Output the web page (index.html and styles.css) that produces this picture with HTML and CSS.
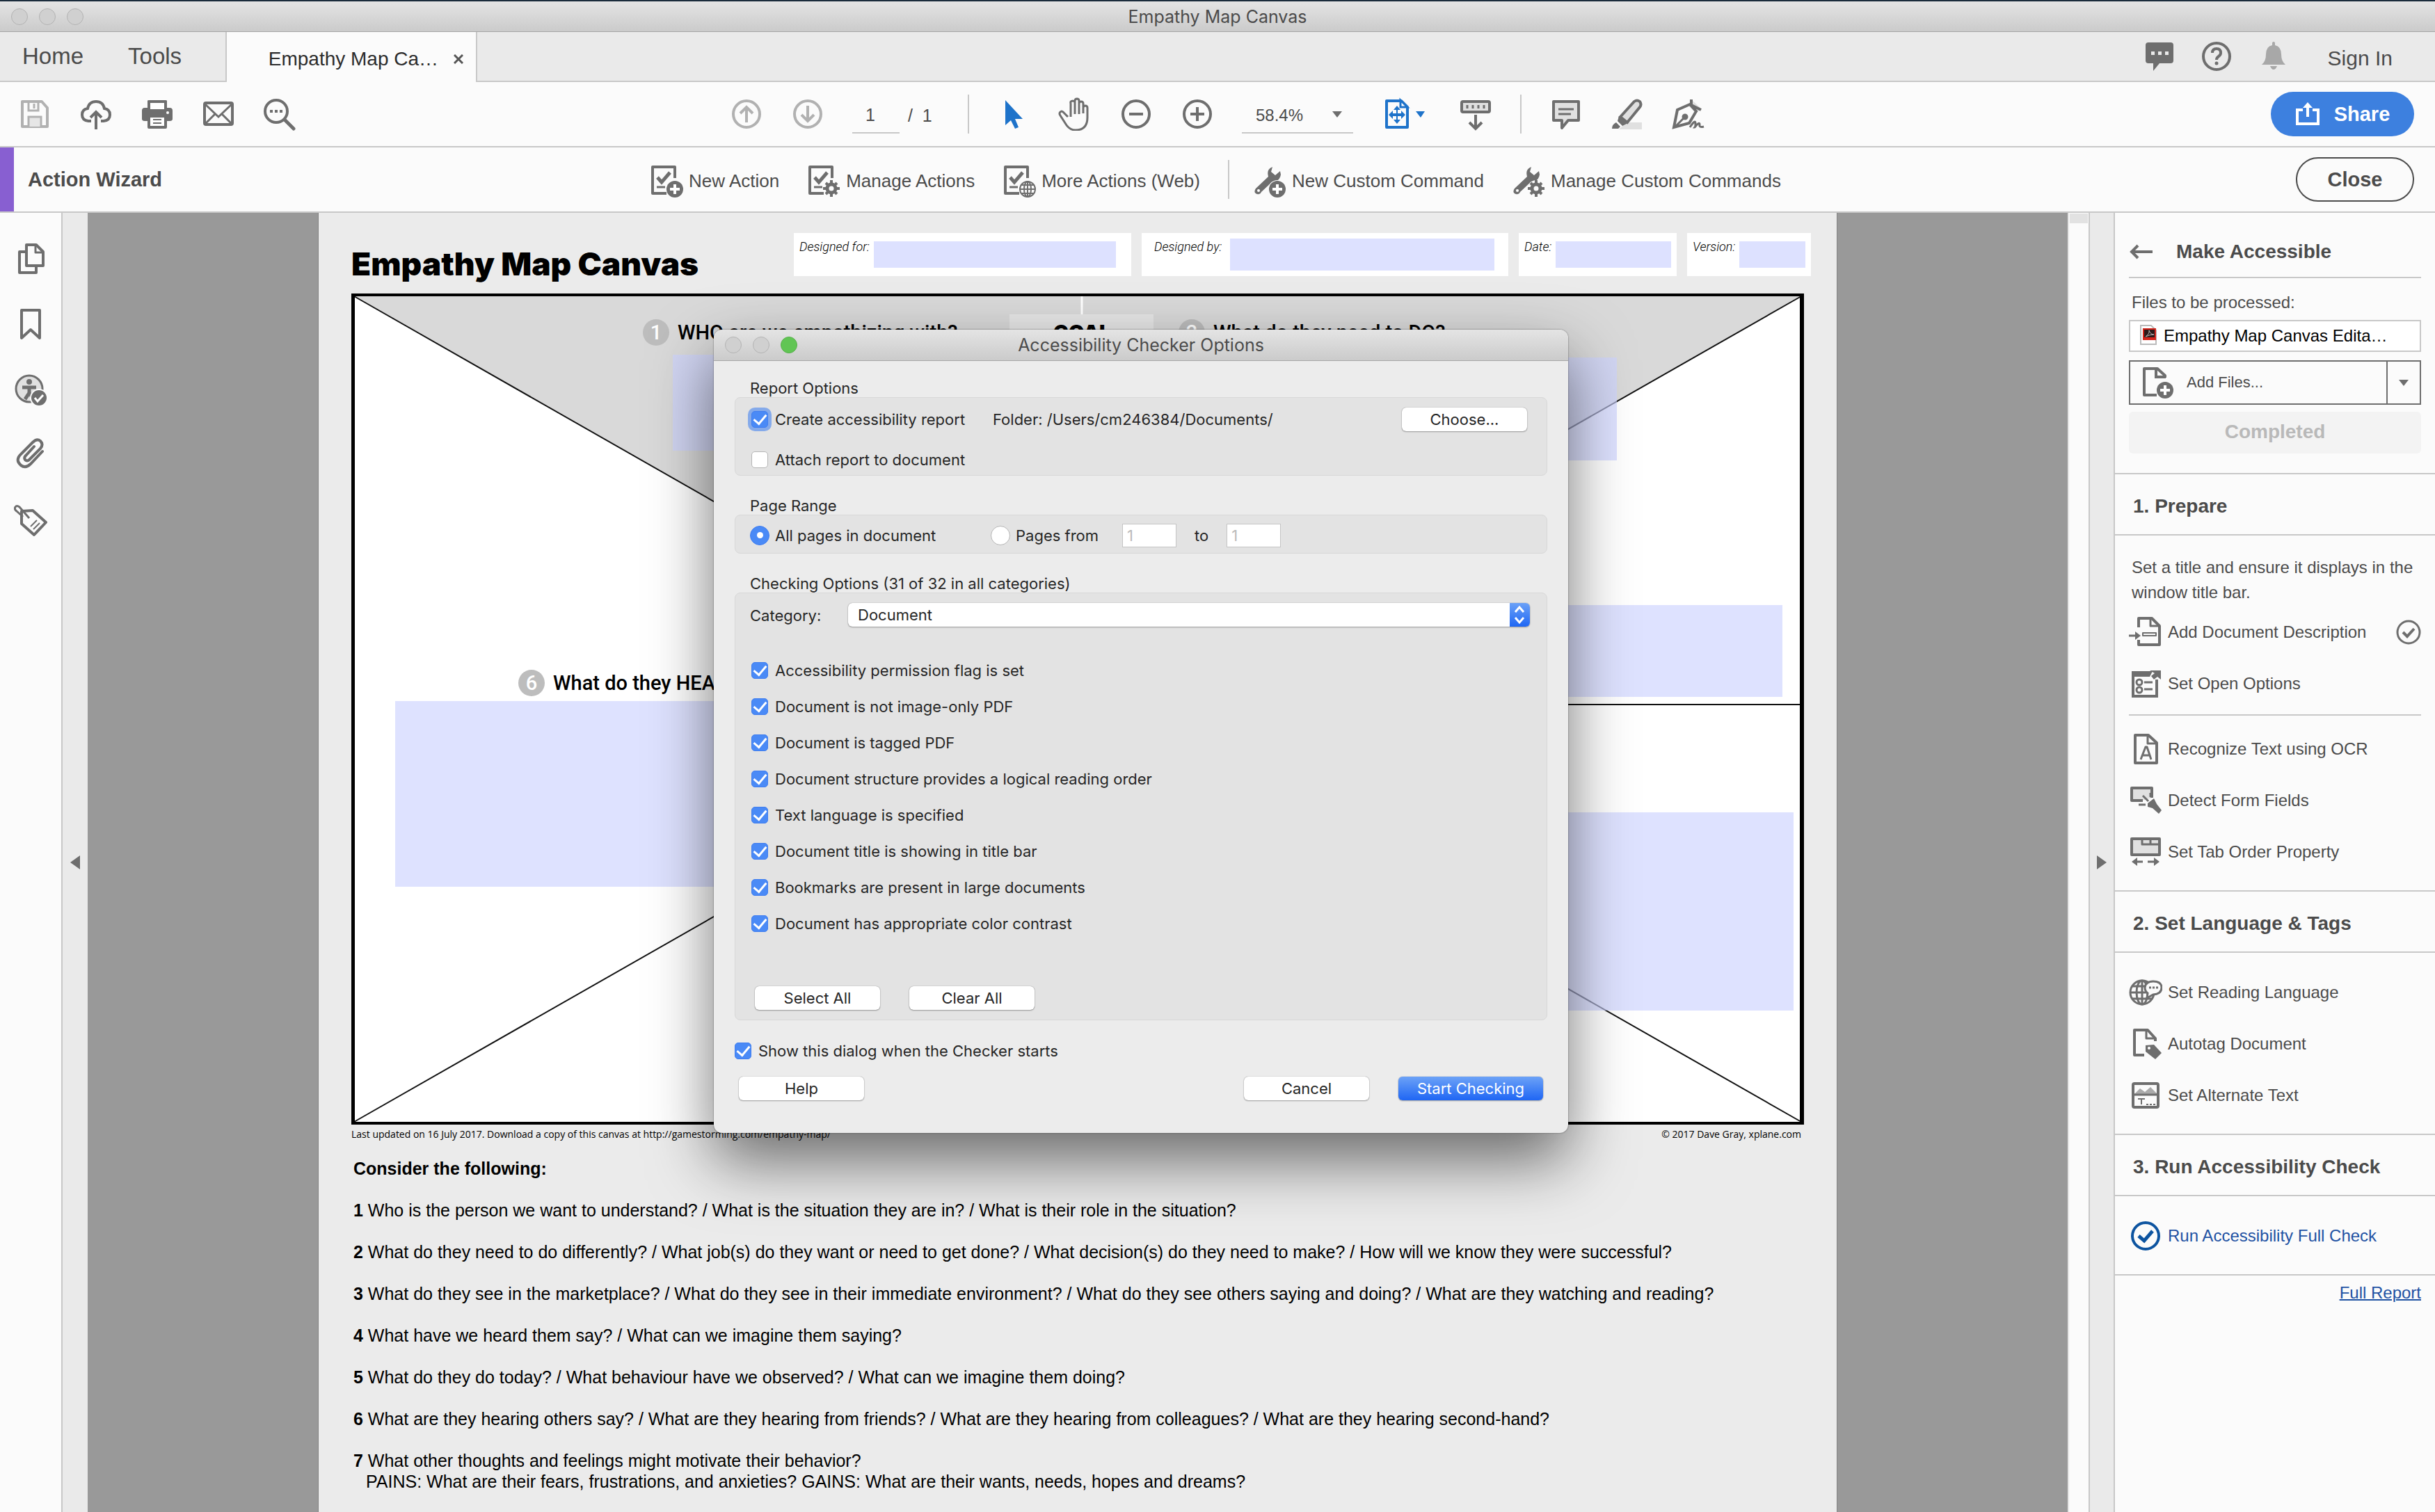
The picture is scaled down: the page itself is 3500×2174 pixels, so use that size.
FILE: index.html
```html
<!DOCTYPE html>
<html lang="en">
<head>
    <meta charset="UTF-8">
    <meta name="viewport" content="width=device-width, initial-scale=1.0">
    <title>Empathy Map Canvas</title>
    <link rel="stylesheet" href="styles.css">
</head>
<body>
    <header class="titlebar">
        <div class="lights"><span class="light"></span><span class="light"></span><span class="light"></span></div>
        <h1 class="window-title">Empathy Map Canvas</h1>
    </header>

    <nav class="tabs">
        <a class="tab" href="#">Home</a>
        <a class="tab" href="#">Tools</a>
        <div class="tab-open">
            <span>Empathy Map Ca…</span>
            <button class="tab-close" aria-label="Close tab"><svg width="14" height="14" viewBox="0 0 14 14"><path d="M1 1l12 12M13 1L1 13" stroke="#555" stroke-width="3"/></svg></button>
        </div>
        <div class="account">
            <button class="icon" aria-label="Messages"><svg viewBox="0 0 48 48"><path d="M8 4h32q4 0 4 4v22q0 4-4 4H24l-9 11V34H8q-4 0-4-4V8q0-4 4-4z" fill="#6e6e6e"/><path d="M12 17h5v5h-5zM22 17h5v5h-5zM32 17h5v5h-5z" fill="#eaeaea"/></svg></button>
            <button class="icon" aria-label="Help"><svg viewBox="0 0 48 48"><circle cx="24" cy="24" r="19" fill="none" stroke="#6e6e6e" stroke-width="4"/><path d="M18 19q0-6 6-6t6 6q0 3-3 5t-3 5" fill="none" stroke="#6e6e6e" stroke-width="4"/><circle cx="24" cy="34" r="2.500" fill="#6e6e6e"/></svg></button>
            <button class="icon" aria-label="Notifications"><svg viewBox="0 0 48 48"><path d="M22 5q0-2 2-2t2 2v3q9 2 9 13 0 10 6 15H7q6-5 6-15 0-11 9-13zM19 38h10q-2 5-5 5t-5-5z" fill="#a8a8a8"/></svg></button>
            <a class="sign-in" href="#">Sign In</a>
        </div>
    </nav>

    <div class="toolbar">
        <div class="file-tools">
            <button class="icon" aria-label="Save"><svg viewBox="0 0 48 48" fill="none" stroke="#b1b1b1" stroke-width="4"><path d="M6 6h28l8 9v27H6z" stroke-linejoin="round"/><path d="M15 7v12h14V7M23 9v7" stroke-width="3"/><path d="M15 42V28h18v14" fill="#e6e6e6" stroke-width="3"/></svg></button>
            <button class="icon" aria-label="Upload"><svg viewBox="0 0 48 48" fill="none" stroke="#6e6e6e" stroke-width="4"><path d="M17 34h-4Q4 33 4 25t8-9Q14 6 24 6t12 10q8 1 8 9t-9 9h-4"/><path d="M24 46V22M16 29l8-8 8 8"/></svg></button>
            <button class="icon" aria-label="Print"><svg viewBox="0 0 48 48"><path d="M10 15V5q0-1 2-1h24q2 0 2 1v10h4q4 0 4 4v12q0 3-4 3h-4v9q0 2-2 2H12q-2 0-2-2v-9H6q-4 0-4-3V19q0-4 4-4z" fill="#6e6e6e"/><path d="M14 8h20v9H14zM14 29h20v12H14z" fill="#fff"/><path d="M18 32h12M18 37h12" stroke="#6e6e6e" stroke-width="2"/><circle cx="39" cy="22" r="2" fill="#fff"/></svg></button>
            <button class="icon" aria-label="Email"><svg viewBox="0 0 48 48" fill="none" stroke="#6e6e6e" stroke-width="3"><rect x="4" y="8" width="40" height="31" rx="2" stroke-width="4"/><path d="M5 10l19 18L43 10M5 38l14-14M43 38L29 24"/></svg></button>
            <button class="icon" aria-label="Search"><svg viewBox="0 0 48 48" fill="none" stroke="#6e6e6e" stroke-width="4"><circle cx="19" cy="20" r="16"/><path d="M31 32l13 13" stroke-width="5" stroke-linecap="round"/><path d="M10 18h4v4h-4zM17 18h4v4h-4zM24 18h4v4h-4z" fill="#6e6e6e" stroke="none"/></svg></button>
        </div>
        <div class="view-tools">
            <button class="icon" aria-label="Previous page"><svg viewBox="0 0 48 48" fill="none" stroke="#b1b1b1" stroke-width="4"><circle cx="24" cy="24" r="19"/><path d="M24 36V15M15 23l9-9 9 9"/></svg></button>
            <button class="icon" aria-label="Next page"><svg viewBox="0 0 48 48" fill="none" stroke="#b1b1b1" stroke-width="4"><circle cx="24" cy="24" r="19"/><path d="M24 12v21M15 25l9 9 9-9"/></svg></button>
            <div class="page-number"><input type="text" value="1" aria-label="Page number"><span>/&nbsp; 1</span></div>
            <span class="divider"></span>
            <button class="icon" aria-label="Select"><svg viewBox="0 0 48 48"><path d="M12 4v36l8-7 6 12 5-2-5-12h11z" fill="#1e73ca"/></svg></button>
            <button class="icon" aria-label="Pan"><svg viewBox="0 0 48 48" fill="none" stroke="#6e6e6e" stroke-width="3" stroke-linejoin="round"><path d="M14 28L7 21q-2-2-4 0t0 5l9 14q5 7 13 7 17 0 17-18V15q0-3-3-3t-3 3v8M36 14V9q0-3-3-3t-3 3v15M30 9V5q0-3-3-3t-3 3v19M24 7q-1-2-3-2-4 0-3 4v19"/></svg></button>
            <button class="icon" aria-label="Zoom out"><svg viewBox="0 0 48 48" fill="none" stroke="#6e6e6e" stroke-width="4"><circle cx="24" cy="24" r="19"/><path d="M14 24h20"/></svg></button>
            <button class="icon" aria-label="Zoom in"><svg viewBox="0 0 48 48" fill="none" stroke="#6e6e6e" stroke-width="4"><circle cx="24" cy="24" r="19"/><path d="M14 24h20M24 14v20"/></svg></button>
            <div class="zoom">
                <select aria-label="Zoom level"><option>58.4%</option></select>
                <svg class="caret" width="14" height="9" viewBox="0 0 14 9"><path d="M0 0h14L7 9z" fill="#6e6e6e"/></svg>
            </div>
            <button class="icon fit" aria-label="Fit page"><svg viewBox="0 0 64 48"><path d="M8 5h21l9 9v29H8z" fill="none" stroke="#1e73ca" stroke-width="4" stroke-linejoin="round"/><path d="M28 4v10h10z" fill="#fff" stroke="#1e73ca" stroke-width="3"/><path d="M23 12l5 6h-4v5h5v-4l6 6-6 6v-4h-5v5h4l-5 6-5-6h4v-5h-5v4l-6-6 6-6v4h5v-5h-4zM50 20h13l-6 9z" fill="#1e73ca"/></svg></button>
            <button class="icon" aria-label="Read mode"><svg viewBox="0 0 48 48" fill="none" stroke="#6e6e6e" stroke-width="4"><rect x="4" y="6" width="40" height="15" rx="2" fill="#e0e0e0"/><path d="M12 11v5M20 11v5M28 11v5M36 11v5" stroke-width="3"/><path d="M24 25v18M15 36l9 9 9-9"/></svg></button>
            <span class="divider"></span>
            <button class="icon" aria-label="Comment"><svg viewBox="0 0 48 48"><path d="M6 6h36v27H27L18 44V33H6z" fill="#e0e0e0" stroke="#6e6e6e" stroke-width="4" stroke-linejoin="round"/><path d="M13 17h22M13 24h18" stroke="#6e6e6e" stroke-width="3"/></svg></button>
            <button class="icon" aria-label="Highlight"><svg viewBox="0 0 48 48"><path d="M12 46l10-10h23v10z" fill="#e0e0e0"/><path d="M14 28L34 6q4-3 8 0 3 4 0 8L24 36z" fill="#e0e0e0" stroke="#6e6e6e" stroke-width="4"/><path d="M12 27l13 10-8 4-7-7zM8 36l6 6-3 3H2q0-6 6-9z" fill="#6e6e6e"/></svg></button>
            <button class="icon" aria-label="Sign"><svg viewBox="0 0 48 48" fill="none" stroke="#6e6e6e" stroke-width="3"><path d="M29 4l13 12-7 7-12-12z" fill="#e0e0e0" stroke="none"/><path d="M28 3v8L42 18M26 10L8 18 3 43l22-6 10-17z" stroke-width="4"/><path d="M4 43l14-14"/><circle cx="19" cy="28" r="3" fill="#6e6e6e"/><path d="M26 43q8-12 8-6t-1 6q7-9 7-4-1 5 6 3"/></svg></button>
        </div>
        <div class="toolbar-end">
            <button class="share"><svg width="36" height="36" viewBox="0 0 36 36" fill="none" stroke="#fff" stroke-width="4"><path d="M11 12H3v20h30V12h-8"/><path d="M18 22V5"/><path d="M11 9l7-8 7 8z" fill="#fff" stroke="none"/></svg>Share</button>
        </div>
    </div>

    <div class="action-bar">
        <h2 class="action-title">Action Wizard</h2>
        <div class="actions">
            <button class="action"><svg class="glyph" viewBox="0 0 48 48"><path d="M36 20V4H4v38h20" fill="none" stroke="#6e6e6e" stroke-width="4" stroke-linejoin="round"/><path d="M11 19l6 7L29 12" fill="none" stroke="#6e6e6e" stroke-width="5"/><path d="M10 33h12" stroke="#6e6e6e" stroke-width="3"/><circle cx="36" cy="36" r="12" fill="#6e6e6e"/><path d="M36 29v14M29 36h14" stroke="#fff" stroke-width="4"/></svg>New Action</button>
            <button class="action"><svg class="glyph" viewBox="0 0 48 48"><path d="M36 20V4H4v38h20" fill="none" stroke="#6e6e6e" stroke-width="4" stroke-linejoin="round"/><path d="M11 19l6 7L29 12" fill="none" stroke="#6e6e6e" stroke-width="5"/><path d="M10 33h12" stroke="#6e6e6e" stroke-width="3"/><circle cx="35" cy="35" r="6" fill="none" stroke="#6e6e6e" stroke-width="5"/><path d="M35 23v5M35 42v5M23 35h5M42 35h5M27 27l3 3M40 40l3 3M43 27l-3 3M27 43l3-3" stroke="#6e6e6e" stroke-width="4"/></svg>Manage Actions</button>
            <button class="action"><svg class="glyph" viewBox="0 0 48 48"><path d="M36 20V4H4v38h20" fill="none" stroke="#6e6e6e" stroke-width="4" stroke-linejoin="round"/><path d="M11 19l6 7L29 12" fill="none" stroke="#6e6e6e" stroke-width="5"/><path d="M10 33h12" stroke="#6e6e6e" stroke-width="3"/><g fill="none" stroke="#6e6e6e" stroke-width="2"><circle cx="36" cy="36" r="11"/><ellipse cx="36" cy="36" rx="5" ry="11"/><path d="M36 25v22M25 36h22M27 30h18M27 42h18"/></g></svg>More Actions (Web)</button>
            <span class="divider"></span>
            <button class="action"><svg class="glyph" viewBox="0 0 48 48"><path d="M28 4q-9 3-6 14L4 35q-4 6 2 8 4 1 6-3l16-15q10 1 12-10l-1-5-7 6-6-5z" fill="#6e6e6e"/><circle cx="8" cy="38" r="2" fill="#fff"/><circle cx="35" cy="36" r="13" fill="#fbfbfb"/><circle cx="35" cy="36" r="12" fill="#6e6e6e"/><path d="M35 29v14M28 36h14" stroke="#fff" stroke-width="4"/></svg>New Custom Command</button>
            <button class="action"><svg class="glyph" viewBox="0 0 48 48"><path d="M28 4q-9 3-6 14L4 35q-4 6 2 8 4 1 6-3l16-15q10 1 12-10l-1-5-7 6-6-5z" fill="#6e6e6e"/><circle cx="8" cy="38" r="2" fill="#fff"/><circle cx="35" cy="35" r="12" fill="#fbfbfb"/><circle cx="35" cy="35" r="6" fill="none" stroke="#6e6e6e" stroke-width="5"/><path d="M35 23v5M35 42v5M23 35h5M42 35h5M27 27l3 3M40 40l3 3M43 27l-3 3M27 43l3-3" stroke="#6e6e6e" stroke-width="4"/></svg>Manage Custom Commands</button>
        </div>
        <div class="toolbar-end">
            <button class="close">Close</button>
        </div>
    </div>

    <main class="workspace">
        <aside class="rail">
            <button class="icon" aria-label="Pages"><svg viewBox="0 0 48 48" fill="none" stroke="#6e6e6e" stroke-width="4" stroke-linejoin="round"><path d="M16 14H8v30h24v-8"/><path d="M18 4h14l10 10v20H18z" fill="#fbfbfb"/><path d="M31 4v11h11" stroke-width="3"/></svg></button>
            <button class="icon" aria-label="Bookmarks"><svg viewBox="0 0 48 48" fill="none" stroke="#6e6e6e" stroke-width="4" stroke-linejoin="round"><path d="M11 4h26v40L24 32 11 44z"/></svg></button>
            <button class="icon" aria-label="Accessibility"><svg viewBox="0 0 48 48"><circle cx="22" cy="23" r="19" fill="#e0e0e0" stroke="#6e6e6e" stroke-width="3"/><circle cx="22" cy="13" r="4" fill="#6e6e6e"/><path d="M12 21h20M22 21v8l-6 9M22 29l5 7" fill="none" stroke="#6e6e6e" stroke-width="5"/><circle cx="36" cy="36" r="13" fill="#fbfbfb"/><circle cx="36" cy="36" r="11" fill="#6e6e6e"/><path d="M30 36l4 5 8-9" fill="none" stroke="#fff" stroke-width="3"/></svg></button>
            <button class="icon" aria-label="Attachments"><svg viewBox="0 0 48 48" fill="none" stroke="#6e6e6e" stroke-width="4" stroke-linecap="round"><path d="M41 19L24 37q-7 7-14 2-8-7-1-15L27 6q6-6 11-2 5 5 0 11L22 31q-3 3-6 0-2-3 1-6l12-13"/></svg></button>
            <button class="icon" aria-label="Tags"><svg viewBox="0 0 48 48" fill="none" stroke="#6e6e6e" stroke-width="4" stroke-linejoin="round"><path d="M11 11l16-1 19 17-17 18L11 29z"/><path d="M22 21L8 5Q4 2 2 5t2 6l9 8" stroke-width="3"/><path d="M24 33l9-9M28 37l9-9" stroke-width="2"/></svg></button>
        </aside>
        <button class="collapse" aria-label="Hide left pane"><svg width="14" height="20" viewBox="0 0 14 20"><path d="M14 0v20L0 10z" fill="#6e6e6e"/></svg></button>

        <div class="viewport">
            <article class="sheet">
                <header class="sheet-head">
                    <h2 class="sheet-title">Empathy Map Canvas</h2>
                    <div class="meta">
                        <label class="meta-box for">Designed for: <input type="text"></label>
                        <label class="meta-box by">Designed by: <input type="text"></label>
                        <label class="meta-box">Date: <input type="text"></label>
                        <label class="meta-box">Version: <input type="text"></label>
                    </div>
                </header>

                <div class="map">
                    <svg class="map-lines" viewBox="0 0 2088 1195" preserveAspectRatio="none">
                        <path d="M0 0h2088v1195H0z" fill="#fff"/>
                        <path d="M4 4h2080L1044 597z" fill="#d9d9d9"/>
                        <path d="M4 4l2080 1187M2084 4L4 1191M1044 591h1040" stroke="#111" stroke-width="2"/>
                        <path d="M1050 4v27" stroke="#fff" stroke-width="3"/>
                        <path d="M946 30h207v60H946z" fill="#e6e6e6"/>
                        <path d="M0 0h2088v1195H0zM5 4v1187h2077V4z" fill="#000" fill-rule="evenodd"/>
                    </svg>
                    <p class="question q1"><span class="badge">1</span>WHO are we empathizing with?</p>
                    <p class="goal">GOAL</p>
                    <p class="question q2"><span class="badge">2</span>What do they need to DO?</p>
                    <p class="question q6"><span class="badge">6</span>What do they HEAR?</p>
                    <textarea class="answer a1" aria-label="Who are we empathizing with"></textarea>
                    <textarea class="answer a2" aria-label="What do they need to do"></textarea>
                    <textarea class="answer a3" aria-label="What do they see"></textarea>
                    <textarea class="answer a4" aria-label="What do they say"></textarea>
                    <textarea class="answer a6" aria-label="What do they hear"></textarea>
                </div>

                <footer class="credits">
                    <span>Last updated on 16 July 2017. Download a copy of this canvas at http://gamestorming.com/empathy-map/</span>
                    <span>© 2017 Dave Gray, xplane.com</span>
                </footer>

                <div class="consider">
                    <p><b>Consider the following:</b></p>
                    <p><b>1</b> Who is the person we want to understand? / What is the situation they are in? / What is their role in the situation?</p>
                    <p><b>2</b> What do they need to do differently? / What job(s) do they want or need to get done? / What decision(s) do they need to make? / How will we know they were successful?</p>
                    <p><b>3</b> What do they see in the marketplace? / What do they see in their immediate environment? / What do they see others saying and doing? / What are they watching and reading?</p>
                    <p><b>4</b> What have we heard them say? / What can we imagine them saying?</p>
                    <p><b>5</b> What do they do today? / What behaviour have we observed? / What can we imagine them doing?</p>
                    <p><b>6</b> What are they hearing others say? / What are they hearing from friends? / What are they hearing from colleagues? / What are they hearing second-hand?</p>
                    <p><b>7</b> What other thoughts and feelings might motivate their behavior?<br><span class="indent">PAINS: What are their fears, frustrations, and anxieties? GAINS: What are their wants, needs, hopes and dreams?</span></p>
                </div>
            </article>
        </div>
        <div class="scrollbar"><div class="thumb"></div></div>
        <button class="collapse right" aria-label="Hide right pane"><svg width="14" height="20" viewBox="0 0 14 20"><path d="M0 0v20l14-10z" fill="#6e6e6e"/></svg></button>

        <aside class="panel">
            <div class="panel-files">
                <div class="panel-head">
                    <button class="back" aria-label="Back"><svg width="34" height="22" viewBox="0 0 34 22" fill="none" stroke="#6e6e6e" stroke-width="4"><path d="M34 11H4M13 2l-9 9 9 9"/></svg></button>
                    <h2>Make Accessible</h2>
                </div>
                <p class="files-label">Files to be processed:</p>
                <div class="file-row">
                    <svg width="24" height="32" viewBox="0 0 24 32"><path d="M1 1h15l7 7v20H1z" fill="#fff" stroke="#bbb" stroke-width="2"/><path d="M4 5h19v17H4z" fill="#d4251c"/><path d="M6 7h15v11H6z" fill="#2b1a1a"/><path d="M8 17q6-4 5-9 2 6 7 6-6 0-12 3z" fill="none" stroke="#bbb" stroke-width="1"/></svg>
                    <span>Empathy Map Canvas Edita…</span>
                </div>
                <div class="add-files">
                    <button class="add-main"><svg width="46" height="48" viewBox="0 0 46 48"><path d="M33 17v-3L22 4H3v38h18" fill="none" stroke="#6e6e6e" stroke-width="4" stroke-linejoin="round"/><path d="M20 4v12h14" fill="none" stroke="#6e6e6e" stroke-width="4"/><circle cx="33" cy="35" r="12" fill="#6e6e6e"/><path d="M33 28v14M26 35h14" stroke="#fff" stroke-width="4"/></svg>Add Files...</button>
                    <button class="add-more" aria-label="More sources"><svg width="14" height="9" viewBox="0 0 14 9"><path d="M0 0h14L7 9z" fill="#6e6e6e"/></svg></button>
                </div>
                <button class="completed" disabled>Completed</button>
            </div>

            <h3 class="step">1. Prepare</h3>
            <div class="step-body prepare">
                <p class="hint">Set a title and ensure it displays in the window title bar.</p>
                <a class="task" href="#"><svg class="glyph" viewBox="0 0 48 48" fill="none" stroke="#6e6e6e" stroke-width="4" stroke-linejoin="round"><path d="M14 17V4h19l11 11v27H14v-7"/><path d="M31 4v11h12" stroke-width="3"/><path d="M20 25h19v4H20z" stroke-width="2"/><path d="M0 29h10" stroke-width="3"/><path d="M9 23l8 6-8 6z" fill="#6e6e6e" stroke="none"/></svg>Add Document Description<svg class="done" width="36" height="36" viewBox="0 0 36 36" fill="none" stroke="#6e6e6e" stroke-width="3"><circle cx="18" cy="18" r="16"/><path d="M10 18l6 6 10-11" stroke-width="4"/></svg></a>
                <a class="task" href="#"><svg class="glyph" viewBox="0 0 48 48" fill="none" stroke="#6e6e6e" stroke-width="3"><path d="M32 8H6v34h34V18" stroke-width="4"/><path d="M4 6h30l-4 8H4zM30 5h16v13l-5-4-5 4-4-5 5-4z" fill="#6e6e6e" stroke="none"/><circle cx="15" cy="22" r="4"/><circle cx="15" cy="33" r="4"/><path d="M22 22h12M22 32h12"/></svg>Set Open Options</a>
                <hr>
                <a class="task" href="#"><svg class="glyph" viewBox="0 0 48 48" fill="none" stroke="#6e6e6e" stroke-width="4" stroke-linejoin="round"><path d="M9 4h19l12 11v29H9z"/><path d="M27 4v12h12" stroke-width="3"/><path d="M17 39l7-18h2l6 18M20 33h10" stroke-width="3"/></svg>Recognize Text using OCR</a>
                <a class="task" href="#"><svg class="glyph" viewBox="0 0 48 48" fill="none" stroke="#6e6e6e" stroke-width="4" stroke-linejoin="round"><path d="M20 24H4V6h29v14" fill="#e0e0e0"/><path d="M20 17l8 8M31 13v6M14 30h10" stroke-width="3"/><path d="M27 28l9-7 4 8 7 9-4 5-9-8-7-2z" fill="#6e6e6e" stroke="none"/></svg>Detect Form Fields</a>
                <a class="task" href="#"><svg class="glyph" viewBox="0 0 48 48" fill="none" stroke="#6e6e6e" stroke-width="4" stroke-linejoin="round"><path d="M4 5h40v23H4z" fill="#e0e0e0"/><path d="M19 5v8h25M31 5v8" stroke-width="3"/><path d="M20 38H8M27 38h13" stroke-width="3"/><path d="M12 32v12l-8-6zM36 32v12l8-6z" fill="#6e6e6e" stroke="none"/></svg>Set Tab Order Property</a>
            </div>

            <h3 class="step">2. Set Language &amp; Tags</h3>
            <div class="step-body">
                <a class="task" href="#"><svg class="glyph" viewBox="0 0 48 48" fill="none" stroke="#6e6e6e" stroke-width="3"><circle cx="19" cy="24" r="17"/><ellipse cx="19" cy="24" rx="8" ry="17"/><path d="M19 7v34M2 24h34M5 15h28M5 33h28"/><path d="M35 8q12 0 12 9t-12 10l-9 5 1-7q-4-3-4-8 1-9 12-9z" fill="#fbfbfb"/><path d="M29 17h3M34 17h3M39 17h3"/></svg>Set Reading Language</a>
                <a class="task" href="#"><svg class="glyph" viewBox="0 0 48 48" fill="none" stroke="#6e6e6e" stroke-width="4" stroke-linejoin="round"><path d="M38 20v-4L27 4H8v36h14"/><path d="M25 4v12h13" stroke-width="3"/><path d="M24 26l12-1 11 12-9 9-14-11z" fill="#6e6e6e" stroke="none"/><circle cx="29" cy="30" r="2" fill="#fff" stroke="none"/></svg>Autotag Document</a>
                <a class="task" href="#"><svg class="glyph" viewBox="0 0 48 48" fill="none" stroke="#6e6e6e" stroke-width="4"><path d="M8 22l8-8 7 5 8-7 10 10z" fill="#aaa" stroke="none"/><rect x="6" y="7" width="36" height="34" rx="2"/><path d="M6 23h36" stroke-width="3"/><path d="M13 29h10M18 29v8M25 37h3M30 37h3M35 37h3" stroke-width="2"/></svg>Set Alternate Text</a>
            </div>

            <h3 class="step">3. Run Accessibility Check</h3>
            <div class="step-body">
                <a class="task run" href="#"><svg class="glyph" viewBox="0 0 48 48" fill="none" stroke="#0d54a0" stroke-width="4"><circle cx="24" cy="24" r="19"/><path d="M14 24l8 7 12-14" stroke-width="5"/></svg>Run Accessibility Full Check</a>
            </div>
            <div class="report"><a href="#">Full Report</a></div>
        </aside>
    </main>

    <form class="dialog" role="dialog" aria-labelledby="dialog-title">
        <header class="titlebar">
            <div class="lights"><span class="light"></span><span class="light"></span><span class="light green"></span></div>
            <h2 class="window-title" id="dialog-title">Accessibility Checker Options</h2>
        </header>
        <div class="dialog-body">
            <h3>Report Options</h3>
            <section class="group report-group">
                <div class="row">
                    <label class="option report-option"><input class="focused" type="checkbox" checked>Create accessibility report</label>
                    <span>Folder: /Users/cm246384/Documents/</span>
                    <button class="btn choose" type="button">Choose...</button>
                </div>
                <label class="option"><input type="checkbox">Attach report to document</label>
            </section>

            <h3>Page Range</h3>
            <section class="group range-group">
                <label class="option all-pages"><input type="radio" name="range" checked>All pages in document</label>
                <label class="option some-pages"><input type="radio" name="range">Pages from</label>
                <input class="num" type="text" value="1" disabled aria-label="From page">
                <span>to</span>
                <input class="num" type="text" value="1" disabled aria-label="To page">
            </section>

            <h3>Checking Options (31 of 32 in all categories)</h3>
            <section class="group check-group">
                <div class="category">
                    <label for="category">Category:</label>
                    <div class="popup">
                        <select id="category"><option>Document</option></select>
                        <svg class="stepper" width="29" height="34" viewBox="0 0 29 34"><path d="M8 13l6-7 6 7M8 21l6 7 6-7" fill="none" stroke="#fff" stroke-width="3"/></svg>
                    </div>
                </div>
                <div class="checks">
                    <label class="option"><input type="checkbox" checked>Accessibility permission flag is set</label>
                    <label class="option"><input type="checkbox" checked>Document is not image-only PDF</label>
                    <label class="option"><input type="checkbox" checked>Document is tagged PDF</label>
                    <label class="option"><input type="checkbox" checked>Document structure provides a logical reading order</label>
                    <label class="option"><input type="checkbox" checked>Text language is specified</label>
                    <label class="option"><input type="checkbox" checked>Document title is showing in title bar</label>
                    <label class="option"><input type="checkbox" checked>Bookmarks are present in large documents</label>
                    <label class="option"><input type="checkbox" checked>Document has appropriate color contrast</label>
                </div>
                <div class="select-buttons">
                    <button class="btn" type="button">Select All</button>
                    <button class="btn" type="button">Clear All</button>
                </div>
            </section>

            <label class="option show-again"><input type="checkbox" checked>Show this dialog when the Checker starts</label>
            <div class="dialog-buttons">
                <button class="btn" type="button">Help</button>
                <button class="btn cancel" type="button">Cancel</button>
                <button class="btn primary" type="button">Start Checking</button>
            </div>
        </div>
    </form>
</body>
</html>
```
FILE: styles.css
```css
* {
    box-sizing: border-box;
}
body {
    margin: 0;
    height: 100vh;
    display: flex;
    flex-direction: column;
    overflow: hidden;
    position: relative;
    background-color: #fbfbfb;
    border-top: 2px solid #1b2c3c;
    color: #4b4b4b;
    font-family: "Liberation Sans", Arial, sans-serif;
    font-size: 24px;
}
h1, h2, h3, p {
    margin: 0;
}
button {
    padding: 0;
    border: none;
    background: none;
    color: inherit;
    font: inherit;
}
input, select, textarea {
    font: inherit;
    color: inherit;
}
a {
    color: inherit;
    text-decoration: none;
}
svg {
    display: block;
    flex: none;
}

/* window title bars */
.titlebar {
    display: grid;
    grid-template-columns: 1fr auto 1fr;
    align-items: center;
    height: 44px;
    flex: none;
    background: linear-gradient(#e4e4e4, #cbcbcb);
    border-bottom: 1px solid #a5a5a5;
}
.window-title {
    font-family: Inter, sans-serif;
    font-size: 25px;
    font-weight: 400;
    line-height: 32px;
}
.lights {
    display: flex;
    gap: 16px;
    padding-left: 16px;
}
.light {
    width: 24px;
    height: 24px;
    border: 1px solid #b3b3b3;
    border-radius: 50%;
    background-color: #d0d0d0;
}
.light.green {
    background-color: #61c554;
    border-color: #58b04c;
}

/* tab strip */
.tabs {
    display: flex;
    height: 72px;
    flex: none;
    background-color: #eaeaea;
    border-bottom: 2px solid #c8c8c8;
}
.tab {
    padding-left: 32px;
    line-height: 70px;
    font-size: 33px;
    margin-right: 32px;
}
.tab-open {
    display: flex;
    align-items: center;
    justify-content: flex-end;
    gap: 22px;
    width: 362px;
    height: 72px;
    margin-left: 31px;
    padding: 5px 18px 0 0;
    background-color: #fbfbfb;
    border: solid #c8c8c8;
    border-width: 0 2px;
    color: #2c2c2c;
    font-size: 28px;
}
.account {
    display: flex;
    align-items: center;
    gap: 34px;
    margin-left: auto;
    padding-right: 61px;
}
.sign-in {
    margin-left: 20px;
    padding-top: 5px;
    font-size: 30px;
}
.icon {
    width: 48px;
    height: 48px;
    flex: none;
}

/* tool bars */
.toolbar, .action-bar {
    display: grid;
    grid-template-columns: 1fr auto 1fr;
    align-items: center;
    height: 94px;
    flex: none;
    border-bottom: 2px solid #c8c8c8;
}
.file-tools {
    display: flex;
    gap: 40px;
    padding-left: 26px;
}
.view-tools {
    display: flex;
    align-items: center;
    gap: 40px;
}
.page-number {
    display: flex;
    align-items: center;
    gap: 12px;
    width: 126px;
    font-size: 25px;
}
.page-number input {
    width: 68px;
    height: 56px;
    padding: 4px 16px 0 0;
    border: none;
    border-bottom: 2px solid #c8c8c8;
    background: none;
    text-align: center;
}
.page-number span {
    padding-top: 4px;
    white-space: nowrap;
}
.divider {
    width: 2px;
    height: 56px;
    background-color: #c8c8c8;
}
.zoom {
    position: relative;
    width: 160px;
}
.zoom select {
    width: 100%;
    height: 56px;
    padding: 4px 20px 0;
    appearance: none;
    border: none;
    border-bottom: 2px solid #c8c8c8;
    background: none;
}
.caret {
    position: absolute;
    right: 16px;
    top: 24px;
}
.icon.fit {
    width: 64px;
    margin-right: 8px;
}
.toolbar-end {
    display: flex;
    justify-content: flex-end;
    padding-right: 30px;
}
.share, .close {
    display: flex;
    align-items: center;
    justify-content: center;
    gap: 20px;
    width: 206px;
    height: 64px;
    border-radius: 32px;
    background-color: #3d80df;
    color: #fff;
    font-size: 29px;
    font-weight: 700;
}
.close {
    width: 170px;
    border: 2px solid #4b4b4b;
    background: none;
    color: #4b4b4b;
}
.action-title {
    padding-left: 20px;
    border-left: 20px solid #885fd1;
    font-size: 29px;
    line-height: 92px;
}
.actions {
    display: flex;
    align-items: center;
    gap: 40px;
    padding: 4px 6px 0 0;
}
.actions .divider {
    margin: -4px -6px 0 0;
}
.action {
    display: flex;
    align-items: center;
    gap: 8px;
    font-size: 26px;
    white-space: nowrap;
}
.glyph {
    width: 48px;
    height: 48px;
}

/* workspace */
.workspace {
    display: flex;
    flex: 1;
    min-height: 0;
}
.rail {
    display: flex;
    flex-direction: column;
    align-items: center;
    gap: 46px;
    width: 90px;
    flex: none;
    padding-top: 42px;
    border-right: 2px solid #c8c8c8;
}
.collapse {
    display: flex;
    align-items: center;
    justify-content: center;
    width: 36px;
    flex: none;
    background-color: #eaeaea;
}
.collapse.right {
    border: solid #c8c8c8;
    border-width: 0 2px;
    width: 38px;
}
.viewport {
    flex: 1;
    min-width: 0;
    overflow: hidden;
    background-color: #999;
}
.scrollbar {
    width: 30px;
    flex: none;
    background-color: #fbfbfb;
    border-left: 2px solid #e4e4e4;
}
.thumb {
    height: 14px;
    margin: 1px;
    background-color: #e2e2e2;
}

/* the document */
.sheet {
    max-width: 2184px;
    min-height: 100%;
    margin: 0 auto;
    padding: 0 47px;
    border: solid #848484;
    border-width: 0 1px;
    background-color: #ebebeb;
    color: #000;
}
.sheet-head {
    display: flex;
    align-items: center;
    justify-content: space-between;
    height: 116px;
    margin-right: -10px;
}
.sheet-title {
    font-family: Inter, sans-serif;
    font-size: 46px;
    font-weight: 900;
    line-height: 60px;
    padding-top: 30px;
    white-space: nowrap;
}
.meta {
    display: grid;
    grid-template-columns: 485fr 527fr 227fr 178fr;
    gap: 15px;
    width: 70%;
    max-width: 1462px;
    padding-top: 4px;
}
.meta-box {
    display: flex;
    gap: 6px;
    min-width: 0;
    height: 62px;
    padding: 12px 8px;
    background-color: #fff;
    font-family: Roboto, sans-serif;
    font-size: 18px;
    font-style: italic;
    font-weight: 300;
    line-height: 16px;
    white-space: nowrap;
}
.meta-box.for {
    padding-right: 22px;
}
.meta-box.by {
    gap: 12px;
    padding: 8px 20px 8px 18px;
    line-height: 24px;
}
.meta-box input {
    flex: 1;
    min-width: 0;
    border: none;
    background-color: #dde1ff;
}
.map {
    position: relative;
    height: 1195px;
}
.map-lines {
    width: 100%;
    height: 100%;
}
.question, .goal {
    position: absolute;
    display: flex;
    align-items: center;
    gap: 12px;
    font-family: Roboto, sans-serif;
    font-size: 29px;
    font-weight: 500;
    line-height: 38px;
    white-space: nowrap;
}
.badge {
    width: 38px;
    height: 38px;
    border-radius: 50%;
    background-color: #bdbdbd;
    color: #fff;
    text-align: center;
}
.q1 {
    left: 419px;
    top: 37px;
}
.q2 {
    left: 1189px;
    top: 37px;
}
.q6 {
    left: 240px;
    top: 541px;
}
.goal {
    left: 1009px;
    top: 37px;
    font-family: Inter, sans-serif;
    font-weight: 900;
}
.answer {
    position: absolute;
    border: none;
    resize: none;
    background-color: rgba(204, 210, 255, 0.65);
}
.a1 {
    left: 462px;
    top: 88px;
    width: 480px;
    height: 138px;
}
.a2 {
    right: 269px;
    top: 92px;
    width: 580px;
    height: 148px;
}
.a3 {
    right: 31px;
    top: 448px;
    width: 600px;
    height: 132px;
}
.a4 {
    right: 15px;
    top: 746px;
    width: 600px;
    height: 285px;
}
.a6 {
    left: 63px;
    top: 586px;
    width: 600px;
    height: 267px;
}
.credits {
    display: flex;
    justify-content: space-between;
    padding-right: 4px;
    padding-top: 4px;
    font-family: "Open Sans", sans-serif;
    font-size: 14px;
    line-height: 20px;
}
.consider {
    padding: 24px 0 0 3px;
    font-size: 25px;
    line-height: 30px;
    white-space: nowrap;
}
.consider p {
    margin-bottom: 30px;
}
.indent {
    padding-left: 18px;
}

/* right panel */
.panel {
    width: 460px;
    flex: none;
}
.panel-files {
    padding: 30px 20px 28px;
}
.panel-head {
    display: flex;
    align-items: center;
    gap: 34px;
    height: 64px;
    padding-bottom: 10px;
    border-bottom: 2px solid #c8c8c8;
}
.panel-head h2 {
    font-size: 28px;
}
.files-label {
    padding: 20px 4px 10px;
    line-height: 30px;
}
.file-row {
    display: flex;
    align-items: center;
    gap: 10px;
    height: 46px;
    padding-left: 14px;
    border: 2px solid #c8c8c8;
    background-color: #fff;
    color: #000;
}
.add-files {
    display: flex;
    height: 64px;
    margin: 12px 0 10px;
    border: 2px solid #6e6e6e;
}
.add-main {
    display: flex;
    align-items: center;
    gap: 18px;
    flex: 1;
    padding-left: 17px;
    font-size: 22px;
}
.add-more {
    display: flex;
    align-items: center;
    justify-content: center;
    width: 48px;
    border-left: 2px solid #6e6e6e;
}
.completed {
    width: 100%;
    height: 60px;
    padding-bottom: 2px;
    border-radius: 6px;
    background-color: #f3f3f3;
    color: #b9b9b9;
    font-size: 28px;
    font-weight: 700;
}
.step {
    height: 90px;
    padding: 4px 26px 0;
    border: solid #c8c8c8;
    border-width: 2px 0;
    font-size: 28px;
    line-height: 84px;
}
.step-body {
    padding: 20px 20px 18px;
}
.prepare {
    padding-top: 28px;
}
.hint {
    padding: 0 4px 2px;
    line-height: 36px;
}
.task {
    display: flex;
    align-items: center;
    gap: 8px;
    height: 74px;
    white-space: nowrap;
}
.done {
    margin-left: auto;
}
.step-body hr {
    margin: 7px 0 11px;
    border: none;
    border-top: 2px solid #c8c8c8;
}
.run {
    color: #1f52a3;
}
.report {
    padding: 10px 20px;
    border-top: 2px solid #c8c8c8;
    line-height: 30px;
    text-align: right;
}
.report a {
    color: #1f52a3;
    text-decoration: underline;
    text-decoration-thickness: 2px;
}

/* checker dialog */
.dialog {
    position: absolute;
    left: 1026px;
    top: 472px;
    width: 1228px;
    border-radius: 12px;
    background-color: #ececec;
    box-shadow: 0 0 2px rgba(0, 0, 0, 0.6), 0 40px 90px rgba(0, 0, 0, 0.55);
    color: #262626;
    font-family: Inter, sans-serif;
    font-size: 22px;
    line-height: 26px;
    overflow: clip;
}
.dialog .titlebar {
    height: 45px;
    color: #4b4b4b;
}
.dialog-body {
    padding: 26px 30px 47px;
}
.dialog h3 {
    padding-left: 22px;
    font-size: 22px;
    font-weight: 400;
}
.group {
    margin-bottom: 30px;
    padding: 13px 23px 4px;
    border: 1px solid #d8d8d8;
    border-radius: 8px;
    background-color: #e3e3e3;
}
.row {
    display: flex;
    align-items: center;
    margin-bottom: 22px;
}
.option {
    display: flex;
    align-items: center;
    gap: 10px;
    height: 36px;
}
.report-option {
    width: 347px;
}
.option input {
    display: flex;
    align-items: center;
    justify-content: center;
    appearance: none;
    width: 24px;
    height: 24px;
    flex: none;
    margin: 0;
    border: 1px solid #b5b5b5;
    border-radius: 5px;
    background-color: #fff;
}
.option input:checked {
    border-color: #3f7df0;
    background-color: #4a8af6;
}
.option input[type="checkbox"]:checked::after {
    content: "";
    width: 8px;
    height: 15px;
    margin-bottom: 4px;
    border: solid #fff;
    border-width: 0 3px 3px 0;
    transform: rotate(40deg);
}
.option input[type="radio"] {
    width: 28px;
    height: 28px;
    margin: 0 -2px;
    border-radius: 50%;
}
.option input[type="radio"]:checked::after {
    content: "";
    width: 9px;
    height: 9px;
    border-radius: 50%;
    background-color: #fff;
}
.option input.focused {
    box-shadow: 0 0 0 5px #85aaea;
}
.btn {
    width: 180px;
    height: 34px;
    border-radius: 6px;
    background-color: #fff;
    box-shadow: 0 0 1px rgba(0, 0, 0, 0.5), 0 1px 2px rgba(0, 0, 0, 0.3);
    line-height: 32px;
}
.choose {
    margin-left: auto;
    margin-right: 5px;
}
.range-group {
    display: flex;
    align-items: center;
    height: 56px;
    padding: 3px 23px 0;
}
.all-pages {
    width: 346px;
}
.some-pages {
    margin-right: 8px;
}
.num {
    width: 78px;
    height: 34px;
    margin: 0 26px;
    padding: 0 6px;
    border: 1px solid #c4c4c4;
    background-color: #fff;
    color: #bbb;
}
.check-group {
    margin-bottom: 26px;
    padding: 14px 23px;
}
.category {
    display: flex;
    align-items: center;
    justify-content: space-between;
    margin: 0 1px 43px -2px;
}
.popup {
    position: relative;
    width: 980px;
    height: 36px;
}
.popup select {
    width: 100%;
    height: 34px;
    padding: 0 14px;
    appearance: none;
    border: none;
    border-radius: 6px;
    background-color: #fff;
    box-shadow: 0 0 1px rgba(0, 0, 0, 0.5), 0 1px 2px rgba(0, 0, 0, 0.3);
}
.stepper {
    position: absolute;
    right: 0;
    top: 0;
    border-radius: 0 6px 6px 0;
    background: linear-gradient(#6ba1f7, #1f67f4);
}
.checks {
    display: grid;
    gap: 16px;
}
.select-buttons {
    display: flex;
    gap: 42px;
    padding: 72px 5px 0;
}
.dialog-buttons {
    display: flex;
    margin-top: 19px;
    padding: 0 6px;
}
.cancel {
    margin-left: auto;
    margin-right: 42px;
}
.primary {
    width: 208px;
    background: linear-gradient(#6ca2f7, #1f66f4);
    color: #fff;
}
```
